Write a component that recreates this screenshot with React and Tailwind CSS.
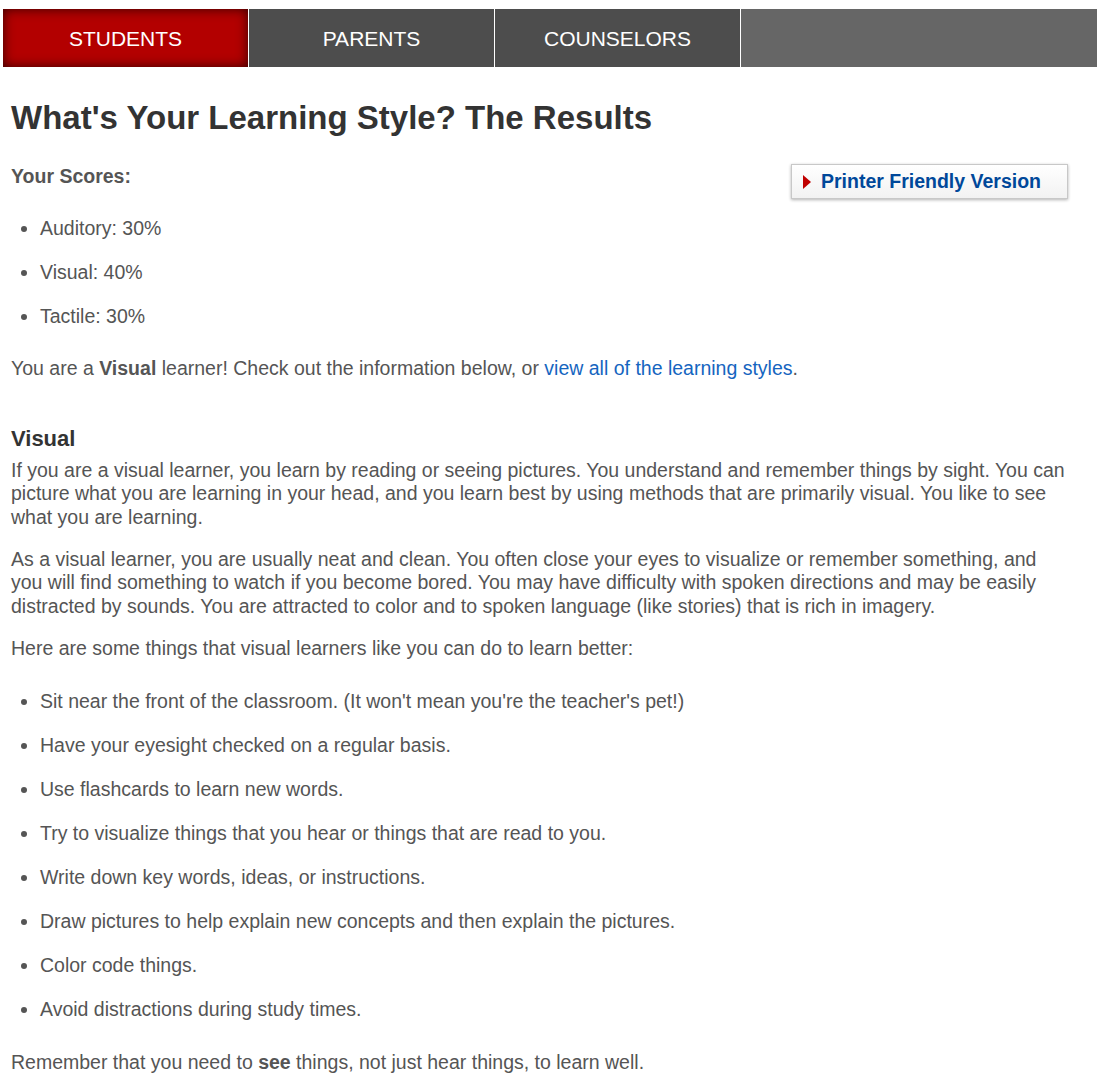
const tabs = ['STUDENTS', 'PARENTS', 'COUNSELORS'];

const scores = ['Auditory: 30%', 'Visual: 40%', 'Tactile: 30%'];

const tips = [
  "Sit near the front of the classroom. (It won't mean you're the teacher's pet!)",
  'Have your eyesight checked on a regular basis.',
  'Use flashcards to learn new words.',
  'Try to visualize things that you hear or things that are read to you.',
  'Write down key words, ideas, or instructions.',
  'Draw pictures to help explain new concepts and then explain the pictures.',
  'Color code things.',
  'Avoid distractions during study times.',
];

function BulletList({ items, className }) {
  return (
    <ul className={`list-disc pl-[29px] flex flex-col gap-[20.6px] ${className}`}>
      {items.map((item) => (
        <li key={item} className="leading-[23.4px]">{item}</li>
      ))}
    </ul>
  );
}

export default function App() {
  return (
    <div className="bg-white min-h-screen font-['Liberation_Sans',Arial,sans-serif] text-[19.5px] text-[#555] leading-[23.4px]">
      <nav className="flex mt-[9px] ml-[3px] mr-[4px] h-[58px] bg-[#666]">
        {tabs.map((t, i) => (
          <div
            key={t}
            className={
              i === 0
                ? 'w-[246px] pt-[2px] flex items-center justify-center text-white text-[21px] bg-[#b30000] shadow-[inset_0_0_12px_rgba(40,0,0,0.9)] border-r border-white'
                : 'w-[246px] pt-[2px] flex items-center justify-center text-white text-[21px] bg-[#4d4d4d] border-r border-white'
            }
          >
            {t}
          </div>
        ))}
      </nav>

      <main className="pl-[11px] pr-[30px]">
        <h1 className="mt-[31px] text-[33px] leading-[40px] font-bold text-[#333]">
          What's Your Learning Style? The Results
        </h1>

        <div className="flex justify-between items-start mt-[27px]">
          <p className="font-bold">Your Scores:</p>
          <button className="-mt-[1px] mr-[3px] w-[277px] h-[35px] flex items-center gap-[10px] pl-[11px] border border-[#c8c8c8] bg-gradient-to-b from-white to-[#f2f2f2] shadow-[0_1px_3px_rgba(0,0,0,0.3)] text-[#00489a] font-bold text-[19.5px]">
            <svg width="8" height="14" viewBox="0 0 8 14">
              <polygon points="0,0 8,7 0,14" fill="#c00000" />
            </svg>
            Printer Friendly Version
          </button>
        </div>

        <BulletList items={scores} className="mt-[18px] mb-[29px]" />

        <p>
          You are a <b>Visual</b> learner! Check out the information below, or{' '}
          <a className="text-[#1565c0]">view all of the learning styles</a>.
        </p>

        <h2 className="mt-[45px] text-[22px] leading-[26px] font-bold text-[#333]">Visual</h2>

        <p className="mt-[7px]">
          If you are a visual learner, you learn by reading or seeing pictures. You understand and remember things by sight. You can picture what you are learning in your head, and you learn best by using methods that are primarily visual. You like to see what you are learning.
        </p>

        <p className="mt-[19px]">
          As a visual learner, you are usually neat and clean. You often close your eyes to visualize or remember something, and you will find something to watch if you become bored. You may have difficulty with spoken directions and may be easily distracted by sounds. You are attracted to color and to spoken language (like stories) that is rich in imagery.
        </p>

        <p className="mt-[19px]">Here are some things that visual learners like you can do to learn better:</p>

        <BulletList items={tips} className="my-[29px]" />

        <p className="mt-[30px]">
          Remember that you need to <b>see</b> things, not just hear things, to learn well.
        </p>
      </main>
    </div>
  );
}
